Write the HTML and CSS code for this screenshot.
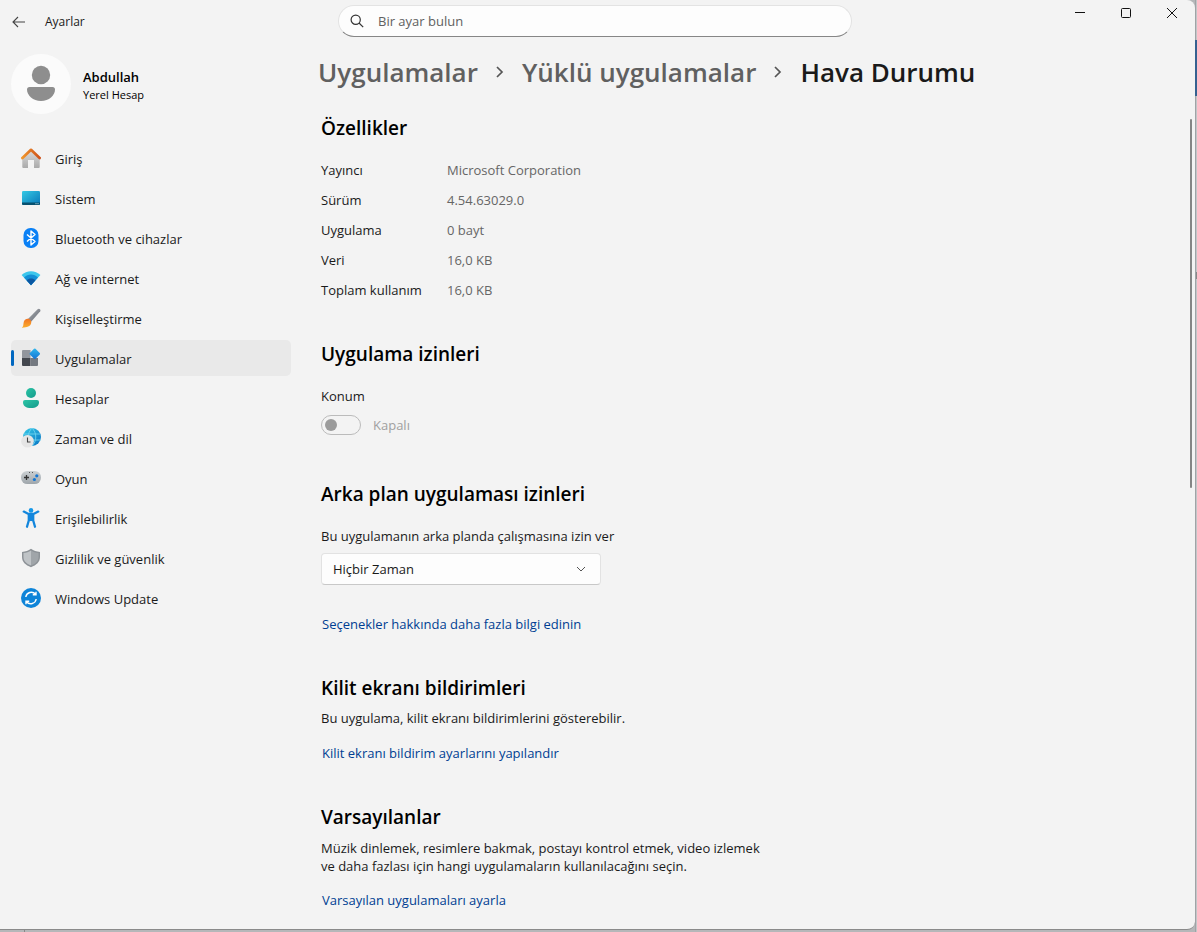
FILE: index.html
```html
<!DOCTYPE html>
<html lang="tr">
<head>
<meta charset="utf-8">
<meta name="viewport" content="width=device-width, initial-scale=1">
<title>Ayarlar</title>
<link rel="stylesheet" href="styles.css">
</head>
<body>
<div class="window">
  <header class="titlebar">
    <div class="titlebar-start">
      <button class="back" type="button" aria-label="Geri">
        <svg width="14" height="12" viewBox="0 0 14 12" fill="none" stroke="#444" stroke-width="1.1"><path d="M13 6H1M6 1L1 6l5 5"/></svg>
      </button>
      <span class="app-name">Ayarlar</span>
    </div>
    <label class="search">
      <svg width="14" height="14" viewBox="0 0 14 14" fill="none" stroke="#333" stroke-width="1.2"><circle cx="5.7" cy="5.7" r="4.6"/><path d="M9 9l4.2 4.2"/></svg>
      <input type="search" placeholder="Bir ayar bulun" aria-label="Bir ayar bulun">
    </label>
    <div class="controls">
      <button type="button" aria-label="Simge durumuna küçült"><svg width="12" height="12" viewBox="0 0 12 12" fill="none" stroke="#111"><path d="M1 5.5h10"/></svg></button>
      <button type="button" aria-label="Ekranı kapla"><svg width="12" height="12" viewBox="0 0 12 12" fill="none" stroke="#111"><rect x="1.5" y="1.5" width="9" height="9" rx="1"/></svg></button>
      <button type="button" aria-label="Kapat"><svg width="12" height="12" viewBox="0 0 12 12" fill="none" stroke="#111"><path d="M1 1l10 10M11 1L1 11"/></svg></button>
    </div>
  </header>

  <div class="body">
    <aside class="sidebar">
      <div class="account">
        <svg class="avatar" width="60" height="60" viewBox="0 0 60 60"><circle cx="30" cy="30" r="30" fill="#fbfbfb"/><circle cx="30" cy="21" r="9.2" fill="#8e8e8e"/><path d="M18.500 33h23a2.500 2.500 0 0 1 2.500 2.500c0 6-6 11.500-14 11.500s-14-5.500-14-11.500a2.500 2.500 0 0 1 2.500-2.500z" fill="#8e8e8e"/></svg>
        <div class="account-text">
          <div class="account-name">Abdullah</div>
          <div class="account-type">Yerel Hesap</div>
        </div>
      </div>
      <nav class="nav">
        <a href="#giris"><svg viewBox="0 0 20 20"><defs><linearGradient id="home" x2="0" y2="1"><stop stop-color="#ddd"/><stop offset="1" stop-color="#aaa"/></linearGradient><linearGradient id="roof" x2="1" y2="0"><stop stop-color="#f0952c"/><stop offset="1" stop-color="#cf5219"/></linearGradient></defs><path d="M1.300 9L10 2l8.700 7v10a1 1 0 0 1-1 1H13v-8H7v8H2.300a1 1 0 0 1-1-1z" fill="url(#home)"/><path d="M1.400 10L10 1.800l8.600 8.200" fill="none" stroke="url(#roof)" stroke-width="2.700" stroke-linecap="round" stroke-linejoin="round"/></svg>Giriş</a>
        <a href="#sistem"><svg viewBox="0 0 20 20"><defs><linearGradient id="sys" x2="1" y2="1"><stop stop-color="#35c9e4"/><stop offset="1" stop-color="#0877b9"/></linearGradient></defs><rect x="1" y="3" width="18" height="14" rx="1.300" fill="url(#sys)"/><path d="M1 14.500h18v1.200a1.300 1.300 0 0 1-1.300 1.300H2.300A1.300 1.300 0 0 1 1 15.700z" fill="#07506f"/><path d="M14.500 15.700h1M16.500 15.700h1" stroke="#bfe9f5"/></svg>Sistem</a>
        <a href="#bluetooth"><svg viewBox="0 0 20 20"><rect x="2.500" width="15" height="20" rx="7" fill="#0a80f5"/><path d="M6 6.500l8 7-4 3.500V3l4 3.500-8 7" fill="none" stroke="#fff" stroke-width="1.400" stroke-linejoin="round"/></svg>Bluetooth ve cihazlar</a>
        <a href="#ag"><svg viewBox="0 0 20 20"><path d="M10 17.200L.6 7C5.500 1.900 14.500 1.900 19.400 7z" fill="#3bc6ec"/><path d="M10 17.200L3 9.500c3.800-4 10.200-4 14 0z" fill="#128fd6"/><path d="M10 17.200L5.600 12.400c2.400-2.600 6.400-2.600 8.800 0z" fill="#0b57a2"/></svg>Ağ ve internet</a>
        <a href="#kisisellestirme"><svg viewBox="0 0 20 20"><defs><linearGradient id="brush" x2="1" y2="1"><stop stop-color="#aaafb5"/><stop offset="1" stop-color="#656970"/></linearGradient><linearGradient id="tip" x2="0" y2="1"><stop stop-color="#f07424"/><stop offset="1" stop-color="#fbae2c"/></linearGradient></defs><path d="M6.500 11.500L16.600 1.200c1.500-1.400 3.500.2 2.600 2l-9.500 11z" fill="url(#brush)"/><path d="M6.200 10.800c2.400-.5 4.600 1.800 4 4.300-.8 3.500-4.500 4.700-9.400 4.600 1.700-1.300 1.400-2.700 1.800-5 .3-2 1.600-3.500 3.600-3.900z" fill="url(#tip)"/></svg>Kişiselleştirme</a>
        <a href="#uygulamalar" class="active" aria-current="page"><svg viewBox="0 0 20 20"><defs><linearGradient id="dia" x2="1" y2="1"><stop stop-color="#31b8ed"/><stop offset="1" stop-color="#1472d4"/></linearGradient></defs><path d="M2 2h7.500v8H1V3a1 1 0 0 1 1-1z" fill="#92969d"/><path d="M1 10h8.500v8H2a1 1 0 0 1-1-1z" fill="#43474e"/><path d="M9.500 10H17v7a1 1 0 0 1-1 1H9.500z" fill="#747980"/><rect x="9.800" y="1.800" width="8" height="8" rx="1" transform="rotate(45 13.800 5.800)" fill="url(#dia)"/></svg>Uygulamalar</a>
        <a href="#hesaplar"><svg viewBox="0 0 20 20"><defs><linearGradient id="acc" x2="1" y2="1"><stop stop-color="#2bc5a6"/><stop offset="1" stop-color="#149a8b"/></linearGradient></defs><circle cx="10" cy="5" r="5" fill="url(#acc)"/><path d="M4 12h12a2 2 0 0 1 2 2c0 4-3 6-8 6s-8-2-8-6a2 2 0 0 1 2-2z" fill="url(#acc)"/></svg>Hesaplar</a>
        <a href="#zaman"><svg viewBox="0 0 20 20"><defs><linearGradient id="globe" x2="1" y2="1"><stop stop-color="#37cbe7"/><stop offset="1" stop-color="#0872c3"/></linearGradient></defs><circle cx="11" cy="9" r="9" fill="url(#globe)"/><path d="M3 6h16M3 12h17M11 0c-5 5-5 13 0 18 5-5 5-13 0-18" fill="none" stroke="#76d9f2" stroke-width=".8"/><circle cx="6.500" cy="13.300" r="6.300" fill="#e5e5e5"/><path d="M6.500 9.500v4.500h3" fill="none" stroke="#444" stroke-width="1.100"/></svg>Zaman ve dil</a>
        <a href="#oyun"><svg viewBox="0 0 20 20"><defs><linearGradient id="pad" x2="0" y2="1"><stop stop-color="#cbd0d3"/><stop offset="1" stop-color="#9fa6ab"/></linearGradient></defs><rect y="3" width="20" height="13" rx="6.300" fill="url(#pad)"/><path d="M3 9.500h5M5.500 7v5" stroke="#333" stroke-width="1.300"/><path d="M8 4.500h1M11 4.500h1" stroke="#555"/><circle cx="15.800" cy="7.800" r="1.600" fill="#1476d4"/><circle cx="13.400" cy="11.500" r="1.600" fill="#1476d4"/></svg>Oyun</a>
        <a href="#erisilebilirlik"><svg viewBox="0 0 20 20"><circle cx="10" cy="2.400" r="2.300" fill="#1698e8"/><path d="M2.800 3.600L7.500 6h5l4.700-2.400M10 6v6M7.800 7v5.500L6 18.700M12.200 7v5.500L14 18.700" fill="none" stroke="#1386dc" stroke-width="2.300" stroke-linecap="round" stroke-linejoin="round"/><path d="M7.500 6h5v7h-5z" fill="#1386dc"/></svg>Erişilebilirlik</a>
        <a href="#gizlilik"><svg viewBox="0 0 20 20"><path d="M10 .8c2.600 2 5.400 3 9 3.100V9c0 5-3.500 8-9 10.200C4.500 17 1 14 1 9V3.900C4.600 3.800 7.400 2.800 10 .8z" fill="#8d9297"/><path d="M10 2.400c2.300 1.600 4.600 2.300 7.500 2.600V9c0 4-2.700 6.500-7.500 8.500z" fill="#a0a5a9"/><path d="M10 2.400v15.100C5.200 15.500 2.500 13 2.500 9V5C5.400 4.700 7.700 4 10 2.400z" fill="#bfc3c6"/></svg>Gizlilik ve güvenlik</a>
        <a href="#update"><svg viewBox="0 0 20 20"><circle cx="10" cy="10" r="10" fill="#0e84d8"/><path d="M4.800 9a5.500 5.500 0 0 1 9.700-2.700M15.200 11a5.500 5.500 0 0 1-9.700 2.700M15 3.700v3.100h-3.200M5 16.300v-3.100h3.200" fill="none" stroke="#fff" stroke-width="1.400"/></svg>Windows Update</a>
      </nav>
    </aside>

    <main class="main">
      <nav class="crumbs" aria-label="Konum yolu">
        <a href="#uygulamalar">Uygulamalar</a>
        <svg width="8" height="12" viewBox="0 0 8 12" fill="none" stroke="#555" stroke-width="1.700"><path d="M1 1l5 5-5 5"/></svg>
        <a href="#yuklu">Yüklü uygulamalar</a>
        <svg width="8" height="12" viewBox="0 0 8 12" fill="none" stroke="#555" stroke-width="1.700"><path d="M1 1l5 5-5 5"/></svg>
        <h1>Hava Durumu</h1>
      </nav>
      <div class="scroll-area">
        <div class="content">
          <section>
            <h2>Özellikler</h2>
            <dl class="props">
              <dt>Yayıncı</dt><dd>Microsoft Corporation</dd>
              <dt>Sürüm</dt><dd>4.54.63029.0</dd>
              <dt>Uygulama</dt><dd>0 bayt</dd>
              <dt>Veri</dt><dd>16,0 KB</dd>
              <dt>Toplam kullanım</dt><dd>16,0 KB</dd>
            </dl>
          </section>
          <section class="permissions">
            <h2>Uygulama izinleri</h2>
            <label class="field-label" for="konum">Konum</label>
            <div class="toggle-row">
              <input class="toggle" id="konum" type="checkbox" role="switch" disabled>
              <span>Kapalı</span>
            </div>
          </section>
          <section class="background">
            <h2>Arka plan uygulaması izinleri</h2>
            <label class="field-label" for="arka-plan">Bu uygulamanın arka planda çalışmasına izin ver</label>
            <div class="select-box">
              <select id="arka-plan"><option>Hiçbir Zaman</option></select>
              <svg width="10" height="6" viewBox="0 0 10 6" fill="none" stroke="#555"><path d="M1 1l4 4 4-4"/></svg>
            </div>
            <a class="link" href="#secenekler">Seçenekler hakkında daha fazla bilgi edinin</a>
          </section>
          <section class="lock">
            <h2>Kilit ekranı bildirimleri</h2>
            <p>Bu uygulama, kilit ekranı bildirimlerini gösterebilir.</p>
            <a class="link" href="#kilit">Kilit ekranı bildirim ayarlarını yapılandır</a>
          </section>
          <section class="defaults">
            <h2>Varsayılanlar</h2>
            <p>Müzik dinlemek, resimlere bakmak, postayı kontrol etmek, video izlemek ve daha fazlası için hangi uygulamaların kullanılacağını seçin.</p>
            <a class="link" href="#varsayilan">Varsayılan uygulamaları ayarla</a>
          </section>
        </div>
        <div class="scrollbar"><div class="thumb"></div></div>
      </div>
    </main>
  </div>
</div>
</body>
</html>
```

FILE: styles.css
```css
* {
  box-sizing: border-box;
}

body {
  margin: 0;
  min-height: 100vh;
  display: flex;
  padding: 0 2px 2px 0;
  background:
    linear-gradient(#888, #888) 24px 100% / 1px 3px no-repeat,
    linear-gradient(#356190, #356190) 100% 40px / 2px 56px no-repeat,
    linear-gradient(#888, #888) 100% 272px / 1px 7px no-repeat,
    linear-gradient(to left, #c4c6c8 1px, #a0a3a6 1px) 100% 0 / 2px 100% no-repeat,
    #b5b7b9;
  color: #1a1a1a;
  font-family: "Open Sans", "Noto Sans", sans-serif;
  font-size: 13px;
  line-height: 20px;
}

button,
input,
select {
  font: inherit;
  color: inherit;
}

a {
  color: inherit;
  text-decoration: none;
}

h1,
h2,
p,
dl,
dd {
  margin: 0;
}

.window {
  flex: 1;
  min-width: 0;
  display: flex;
  flex-direction: column;
  background: #f3f3f3;
  border-bottom: 1px solid #8a8a8a;
  border-radius: 0 8px 8px 0;
}

.titlebar {
  display: grid;
  grid-template-columns: 338px minmax(120px, 514px) 1fr;
}

.titlebar-start {
  display: flex;
  align-items: center;
  padding-top: 6px;
  font-size: 12px;
}

.back {
  display: flex;
  padding: 8px 12px;
  background: none;
  border: 0;
}

.app-name {
  padding-left: 7px;
}

.search {
  display: flex;
  align-items: center;
  gap: 14px;
  height: 32px;
  margin-top: 5px;
  padding: 0 11px;
  background: #fdfdfd;
  border: 1px solid #e3e3e3;
  border-bottom-color: #868686;
  border-radius: 16px;
}

.search input {
  flex: 1;
  min-width: 0;
  padding: 0;
  border: 0;
  background: none;
  outline: 0;
}

.search input::placeholder {
  color: #606060;
  opacity: 1;
}

.controls {
  display: flex;
  justify-content: flex-end;
  align-items: flex-start;
}

.controls button {
  display: flex;
  align-items: center;
  justify-content: center;
  width: 46px;
  height: 26px;
  padding: 0;
  background: none;
  border: 0;
}

.body {
  flex: 1;
  display: grid;
  grid-template-columns: 291px minmax(0, 1fr);
  gap: 27px;
}

.sidebar {
  padding: 17px 0 0 11px;
}

.account {
  display: flex;
  align-items: center;
  gap: 12px;
  font-size: 11px;
  line-height: 18px;
  color: #000;
}

.account-text {
  padding-top: 4px;
}

.account-name {
  font-size: 13px;
  font-weight: 600;
}

.nav {
  display: flex;
  flex-direction: column;
  gap: 4px;
  margin-top: 26px;
}

.nav a {
  display: flex;
  align-items: center;
  gap: 14px;
  height: 36px;
  padding: 2px 10px 0;
  border-radius: 5px;
  position: relative;
}

.nav svg {
  width: 20px;
  height: 20px;
  margin-bottom: 2px;
}

.nav .active {
  background: #e9e9e9;
}

.nav .active::before {
  content: "";
  position: absolute;
  left: 0;
  top: 10px;
  width: 3px;
  height: 16px;
  border-radius: 2px;
  background: #0067c0;
}

.main {
  display: flex;
  flex-direction: column;
}

.crumbs {
  display: flex;
  align-items: center;
  gap: 18px;
  padding-top: 15px;
  color: #606060;
  font-size: 26px;
  font-weight: 600;
  line-height: 40px;
}

.crumbs h1 {
  font: inherit;
  color: #1a1a1a;
}

.scroll-area {
  flex: 1;
  display: flex;
  justify-content: space-between;
}

.content {
  max-width: 454px;
  padding: 22px 0 16px 3px;
}

.content h2 {
  color: #000;
  font-size: 19px;
  font-weight: 600;
  line-height: 28px;
}

.props {
  display: grid;
  grid-template-columns: 126px 1fr;
  row-gap: 10px;
  margin-top: 18px;
}

.props dd {
  color: #666;
}

.permissions {
  margin-top: 40px;
}

.field-label {
  display: block;
  margin-top: 18px;
}

.toggle-row {
  display: flex;
  align-items: center;
  gap: 12px;
  margin-top: 9px;
  color: #a0a0a0;
}

.toggle {
  appearance: none;
  display: flex;
  align-items: center;
  width: 40px;
  height: 20px;
  margin: 0;
  padding: 0 3px;
  border: 1px solid #bbb;
  border-radius: 10px;
}

.toggle::before {
  content: "";
  width: 12px;
  height: 12px;
  border-radius: 50%;
  background: #9b9b9b;
}

.background {
  margin-top: 45px;
}

.select-box {
  display: grid;
  align-items: center;
  width: 280px;
  margin-top: 7px;
}

.select-box select,
.select-box svg {
  grid-area: 1 / 1;
}

.select-box select {
  appearance: none;
  height: 32px;
  padding: 0 11px;
  background: #fdfdfd;
  border: 1px solid #e2e2e2;
  border-bottom-color: #c8c8c8;
  border-radius: 4px;
}

.select-box svg {
  justify-self: end;
  margin-right: 15px;
  pointer-events: none;
}

.link {
  display: block;
  width: fit-content;
  margin-top: 15px;
  padding-left: 1px;
  color: #003e92;
}

.background .link {
  margin-top: 29px;
}

.lock {
  margin-top: 40px;
}

.lock p {
  margin-top: 6px;
}

.defaults {
  margin-top: 40px;
}

.defaults p {
  margin-top: 8px;
  line-height: 18px;
}

.scrollbar {
  width: 2px;
  margin-right: 3px;
  padding-top: 27px;
}

.thumb {
  height: 369px;
  border-radius: 1px;
  background: #858585;
}
```
